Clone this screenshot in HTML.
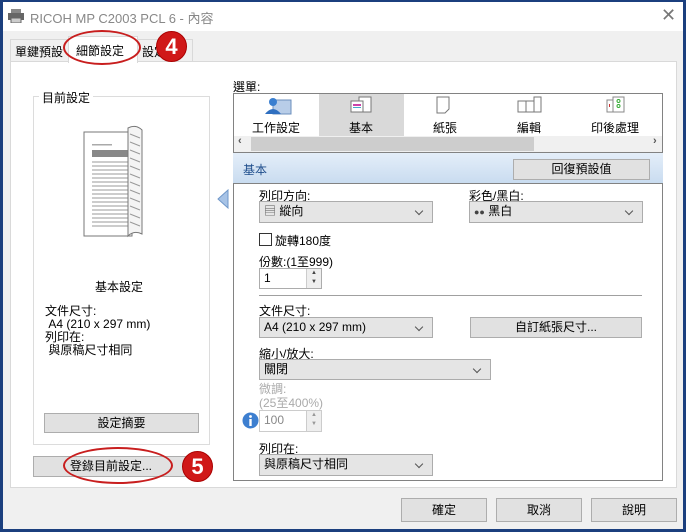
<!DOCTYPE html>
<html><head><meta charset="utf-8"><style>
*{margin:0;padding:0;box-sizing:border-box}
body{width:686px;height:532px;overflow:hidden;font-family:"Liberation Sans","Noto Sans CJK TC",sans-serif;font-size:12px;color:#000;background:#1b3f7e;position:relative}
.a{position:absolute;white-space:nowrap}
.win{position:absolute;left:3px;top:2px;width:680px;height:527px;background:#f0f0f0}
.btn{position:absolute;background:#e1e1e1;border:1px solid #adadad;text-align:center;line-height:18px}
.cb{position:absolute;background:#e5e5e5;border:1px solid #acacac;line-height:19px;padding-left:4px}
.cb:after{content:"";position:absolute;right:10px;top:6px;width:5px;height:5px;border-right:1px solid #555;border-bottom:1px solid #555;transform:rotate(45deg)}
.spin{position:absolute;background:#fff;border:1px solid #acacac;line-height:18px;padding-left:4px}
.spin i{position:absolute;right:0;top:0;width:15px;height:100%;border-left:1px solid #ccc;background:#eee;font-style:normal;font-size:6px;line-height:9px;text-align:center;color:#444}
.red{position:absolute;border-radius:50%;background:#d01818;color:#fff;font-weight:bold;font-size:22px;text-align:center;border:1px solid #a00}
.ell{position:absolute;border:2px solid #c81e1e;border-radius:50%}
</style></head><body>
<div class="win">
<div class="a" style="left:0;top:0;width:680px;height:29px;background:#fff"></div>
<svg class="a" style="left:5px;top:7px" width="16" height="14"><rect x="3" y="0" width="10" height="4" fill="#888"/><rect x="0" y="4" width="16" height="7" fill="#666"/><rect x="3" y="9" width="10" height="5" fill="#ccc" stroke="#666"/></svg>
<div class="a" style="left:27px;top:6px;color:#888;font-size:13px">RICOH MP C2003 PCL 6 - 內容</div>
<div class="a" style="left:658px;top:3px;color:#777;font-size:18px">✕</div>
<div class="a" style="left:7px;top:37px;width:59px;height:23px;border:1px solid #d9d9d9;background:#f0f0f0;padding:3px 0 0 4px">單鍵預設</div>
<div class="a" style="left:134px;top:37px;width:56px;height:23px;border:1px solid #d9d9d9;background:#f0f0f0;padding:3px 0 0 4px">設定</div>
<div class="a" style="left:7px;top:59px;width:667px;height:427px;background:#fff;border:1px solid #d9d9d9"></div>
<div class="a" style="left:65px;top:34px;width:70px;height:27px;border:1px solid #d9d9d9;border-bottom:none;background:#fff;padding:5px 0 0 7px">細節設定</div>
</div>
<div class="ell" style="left:63px;top:30px;width:78px;height:35px"></div>
<div class="red" style="left:156px;top:31px;width:31px;height:31px;line-height:29px">4</div>
<div class="a" style="left:33px;top:96px;width:177px;height:349px;border:1px solid #dcdcdc"></div>
<div class="a" style="left:39px;top:89px;background:#fff;padding:0 3px">目前設定</div>
<svg class="a" style="left:82px;top:122px" width="64" height="118">
<rect x="2" y="10" width="48" height="104" fill="#fff" stroke="#777"/>
<rect x="10" y="22" width="20" height="1.5" fill="#aaa"/>
<rect x="10" y="28" width="38" height="7" fill="#888"/>
<g stroke="#999" stroke-width="1">
<line x1="10" y1="40" x2="46" y2="40"/><line x1="10" y1="44" x2="46" y2="44"/><line x1="10" y1="48" x2="46" y2="48"/><line x1="10" y1="52" x2="46" y2="52"/><line x1="10" y1="56" x2="46" y2="56"/><line x1="10" y1="60" x2="46" y2="60"/><line x1="10" y1="64" x2="46" y2="64"/><line x1="10" y1="68" x2="46" y2="68"/><line x1="10" y1="72" x2="46" y2="72"/><line x1="10" y1="76" x2="46" y2="76"/><line x1="10" y1="80" x2="46" y2="80"/><line x1="10" y1="84" x2="46" y2="84"/><line x1="10" y1="88" x2="46" y2="88"/><line x1="10" y1="92" x2="46" y2="92"/><line x1="10" y1="96" x2="46" y2="96"/><line x1="10" y1="100" x2="46" y2="100"/><line x1="10" y1="104" x2="46" y2="104"/></g>
<path d="M46 6 Q54 2 60 8 L60 112 Q52 108 46 114 Z" fill="#f4f4f4" stroke="#777"/>
<path d="M48 12 L58 16 M48 20 L58 24 M48 28 L58 32 M48 36 L58 40 M48 44 L58 48 M48 52 L58 56 M48 60 L58 64 M48 68 L58 72 M48 76 L58 80 M48 84 L58 88 M48 92 L58 96 M48 100 L58 104" stroke="#999"/>
</svg>
<div class="a" style="left:95px;top:278px">基本設定</div>
<div class="a" style="left:45px;top:305px;line-height:13px">文件尺寸:<br>&nbsp;A4 (210 x 297 mm)<br>列印在:<br>&nbsp;與原稿尺寸相同</div>
<div class="btn" style="left:44px;top:413px;width:155px;height:20px">設定摘要</div>
<div class="btn" style="left:33px;top:456px;width:156px;height:21px;line-height:19px">登錄目前設定...</div>
<div class="ell" style="left:63px;top:447px;width:110px;height:37px"></div>
<div class="red" style="left:182px;top:451px;width:31px;height:31px;line-height:29px">5</div>
<div class="a" style="left:233px;top:78px">選單:</div>
<div class="a" style="left:233px;top:93px;width:430px;height:60px;border:1px solid #828282;background:#fff"></div>
<div class="a" style="left:319px;top:94px;width:85px;height:42px;background:#d9d9d9"></div>
<svg class="a" style="left:263px;top:96px" width="30" height="20"><rect x="10" y="4" width="18" height="14" fill="#b8cde8" stroke="#6b8fbd"/><circle cx="10" cy="6" r="4" fill="#3a7fd0"/><path d="M2 18 Q10 8 18 18Z" fill="#2f6fc0"/></svg>
<svg class="a" style="left:349px;top:96px" width="26" height="18"><rect x="10" y="1" width="12" height="15" fill="#fff" stroke="#777"/><rect x="2" y="5" width="12" height="11" fill="#fff" stroke="#777"/><rect x="4" y="8" width="8" height="2" fill="#c4a"/><rect x="4" y="11" width="8" height="1" fill="#4ac"/></svg>
<svg class="a" style="left:436px;top:96px" width="16" height="18"><path d="M1 1 H13 V13 L9 17 H1Z" fill="#fff" stroke="#777"/></svg>
<svg class="a" style="left:517px;top:96px" width="26" height="18"><rect x="1" y="5" width="10" height="11" fill="#fff" stroke="#777"/><rect x="9" y="5" width="10" height="11" fill="#fff" stroke="#777"/><rect x="17" y="1" width="7" height="15" fill="#fff" stroke="#777"/></svg>
<svg class="a" style="left:606px;top:96px" width="20" height="18"><rect x="1" y="4" width="8" height="12" fill="#fff" stroke="#888"/><rect x="7" y="1" width="11" height="15" fill="#fff" stroke="#888"/><circle cx="12.5" cy="5" r="1.5" fill="none" stroke="#3a3"/><circle cx="12.5" cy="10" r="1.5" fill="none" stroke="#3a3"/><rect x="3" y="8" width="1" height="3" fill="#c33"/></svg>
<div class="a" style="left:252px;top:119px">工作設定</div>
<div class="a" style="left:349px;top:119px">基本</div>
<div class="a" style="left:433px;top:119px">紙張</div>
<div class="a" style="left:517px;top:119px">編輯</div>
<div class="a" style="left:591px;top:119px">印後處理</div>
<div class="a" style="left:234px;top:136px;width:428px;height:16px;background:#f0f0f0"></div>
<div class="a" style="left:251px;top:137px;width:283px;height:14px;background:#cdcdcd"></div>
<div class="a" style="left:238px;top:135px;font-size:11px;font-weight:bold;color:#555">‹</div>
<div class="a" style="left:653px;top:135px;font-size:11px;font-weight:bold;color:#555">›</div>
<div class="a" style="left:233px;top:153px;width:430px;height:30px;background:linear-gradient(#e4eef9,#c9dcf0)"></div>
<div class="a" style="left:243px;top:161px;color:#1e4d8c">基本</div>
<div class="btn" style="left:513px;top:159px;width:137px;height:21px;line-height:19px">回復預設值</div>
<svg class="a" style="left:217px;top:189px" width="12" height="20"><path d="M11 1 L1 10 L11 19Z" fill="#a7c3e6" stroke="#6f97c9"/></svg>
<div class="a" style="left:233px;top:183px;width:430px;height:298px;border:1px solid #828282;background:#fff"></div>
<div class="a" style="left:259px;top:187px">列印方向:</div>
<div class="cb" style="left:259px;top:201px;width:174px;height:22px"><span style="color:#555">▤</span> 縱向</div>
<div class="a" style="left:469px;top:187px">彩色/黑白:</div>
<div class="cb" style="left:469px;top:201px;width:174px;height:22px"><span style="font-size:9px;color:#444">●●</span> 黑白</div>
<div class="a" style="left:259px;top:233px;width:13px;height:13px;border:1px solid #333;background:#fff"></div>
<div class="a" style="left:275px;top:232px">旋轉180度</div>
<div class="a" style="left:259px;top:253px">份數:(1至999)</div>
<div class="spin" style="left:259px;top:268px;width:63px;height:21px">1<i>▲<br>▼</i></div>
<div class="a" style="left:259px;top:295px;width:383px;height:1px;background:#a0a0a0"></div>
<div class="a" style="left:259px;top:302px">文件尺寸:</div>
<div class="cb" style="left:259px;top:317px;width:174px;height:21px;line-height:18px">A4 (210 x 297 mm)</div>
<div class="btn" style="left:470px;top:317px;width:172px;height:21px">自訂紙張尺寸...</div>
<div class="a" style="left:259px;top:345px">縮小/放大:</div>
<div class="cb" style="left:259px;top:359px;width:232px;height:21px;line-height:18px">關閉</div>
<div class="a" style="left:259px;top:382px;color:#aaa;line-height:14px">微調:<br>(25至400%)</div>
<svg class="a" style="left:242px;top:412px" width="17" height="17"><circle cx="8.5" cy="8.5" r="8" fill="#3d7fd0"/><rect x="7.3" y="7" width="2.4" height="7" fill="#fff"/><circle cx="8.5" cy="4.5" r="1.4" fill="#fff"/></svg>
<div class="spin" style="left:259px;top:410px;width:63px;height:22px;color:#888;border-color:#ccc">100<i style="color:#999">▲<br>▼</i></div>
<div class="a" style="left:259px;top:440px">列印在:</div>
<div class="cb" style="left:259px;top:454px;width:174px;height:22px">與原稿尺寸相同</div>
<div class="btn" style="left:401px;top:498px;width:86px;height:24px;line-height:22px">確定</div>
<div class="btn" style="left:496px;top:498px;width:86px;height:24px;line-height:22px">取消</div>
<div class="btn" style="left:591px;top:498px;width:86px;height:24px;line-height:22px">說明</div>
</body></html>
